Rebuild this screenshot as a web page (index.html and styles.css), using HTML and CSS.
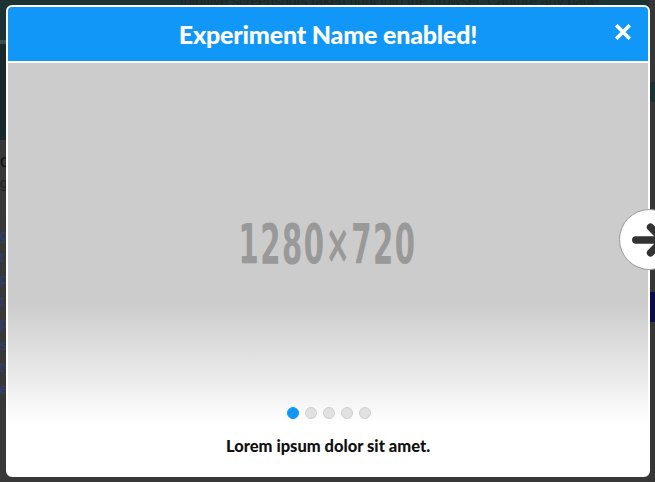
FILE: index.html
```html
<!DOCTYPE html>
<html lang="en">
<head>
<meta charset="utf-8">
<title>Experiment enabled</title>
<link rel="stylesheet" href="styles.css">
</head>
<body>
<div class="page">
  <div class="page-top">
    <p class="page-top-text">Intuitive screenshots taken right into the browser. Capture any page</p>
  </div>
  <div class="page-sep"></div>
  <div class="page-hero"></div>
  <div class="page-body">
    <p class="pb-big">o</p>
    <p class="pb-line">g</p>
    <p class="pb-link">g</p>
    <p class="pb-link">t</p>
    <p class="pb-link">p</p>
    <p class="pb-link">t</p>
    <p class="pb-link">p</p>
    <p class="pb-link">s</p>
    <p class="pb-link">ty</p>
    <p class="pb-link">e</p>
  </div>
  <div class="page-right">
    <div class="pr-teal"></div>
    <div class="pr-navy"></div>
  </div>
</div>

<div class="modal">
  <header class="modal-head">
    <h1 class="modal-title">Experiment Name enabled!</h1>
    <button class="modal-close" aria-label="Close">
      <svg width="16" height="16" viewBox="0 0 16 16"><path d="M2.5 2.5 L13.5 13.5 M13.5 2.5 L2.5 13.5" stroke="#fff" stroke-width="3.6" stroke-linecap="square"/></svg>
    </button>
  </header>
  <div class="modal-body">
    <div class="slide">
      <span class="slide-label">1280×720</span>
    </div>
    <div class="slide-foot">
      <div class="dots">
        <span class="dot active"></span>
        <span class="dot"></span>
        <span class="dot"></span>
        <span class="dot"></span>
        <span class="dot"></span>
      </div>
      <p class="caption">Lorem ipsum dolor sit amet.</p>
    </div>
  </div>
</div>

<button class="next" aria-label="Next">
  <svg width="60" height="60" viewBox="0 0 60 60">
    <path d="M16 30 H44 M31 17 L44 30 L31 43" fill="none" stroke="#333" stroke-width="7.5" stroke-linecap="round" stroke-linejoin="round"/>
  </svg>
</button>
</body>
</html>
```

FILE: styles.css
```css
* { box-sizing: border-box; }
html, body { margin: 0; padding: 0; }
body {
  width: 655px;
  height: 482px;
  overflow: hidden;
  background: #353535;
  font-family: "Lato", "Open Sans", sans-serif;
  position: relative;
}

/* dimmed page behind the modal */
.page { display: flex; flex-direction: column; height: 482px; }
.page-top { height: 40px; background: #1c3234; overflow: hidden; }
.page-top-text {
  margin: -7px 0 0 180px;
  font: 14px "Liberation Sans", sans-serif;
  color: #222;
  white-space: nowrap;
}
.page-sep { height: 4px; background: #3d4b4b; }
.page-hero { height: 96px; background: #17292b; }
.page-body { flex: 1; padding: 10px 0 0 0; background: #383838; }
.page-body p { margin: 0; font: 14px "Liberation Sans", sans-serif; line-height: 22px; }
.pb-big { color: #111; font-weight: bold; font-size: 18px !important; }
.pb-line { color: #222; margin-bottom: 30px !important; }
.pb-link { color: #2b3f78; }

.page-right {
  position: absolute;
  right: 0; top: 0;
  width: 6px; height: 482px;
  display: flex; flex-direction: column;
  background: #363636;
}
.pr-teal { margin-top: 82px; height: 20px; background: #1b3133; }
.pr-navy { margin-top: 190px; height: 30px; background: #0b0b45; }

/* modal */
.modal {
  position: absolute;
  left: 6px; top: 5px;
  width: 644px; height: 472px;
  border: 2px solid #fff;
  border-radius: 6px;
  background: #fff;
  overflow: hidden;
  display: flex;
  flex-direction: column;
}
.modal-head {
  height: 56px;
  background: #1197f7;
  display: flex;
  align-items: center;
  justify-content: center;
  position: relative;
  border-bottom: 2px solid #fff;
  flex: none;
}
.modal-title {
  margin: 0 0 1px;
  color: #fff;
  font-family: "Lato", sans-serif;
  font-weight: 900;
  font-size: 25px;
  letter-spacing: -0.2px;
}
.modal-close {
  position: absolute;
  right: 17px; top: 17px;
  width: 16px; height: 16px;
  padding: 0; border: 0; background: none;
  display: flex;
}
.modal-body { flex: 1; position: relative; }
.slide {
  height: 360px;
  background: linear-gradient(to bottom, #cccccc 0, #cccccc 240px, #e4e4e4 300px, #ffffff 360px);
  display: flex;
  align-items: center;
  justify-content: center;
  padding-top: 1px;
}
.slide-label {
  font-family: "DejaVu Sans Condensed", "DejaVu Sans", sans-serif;
  font-weight: bold;
  font-size: 45px;
  color: #999;
  display: inline-block;
  transform: scale(0.72, 1.24);
  letter-spacing: 2px;
}
.slide-foot {
  position: absolute;
  left: 0; right: 0; top: 344px;
  display: flex;
  flex-direction: column;
  align-items: center;
}
.dots { display: flex; gap: 6px; margin-left: 2px; }
.dot {
  width: 12px; height: 12px;
  border-radius: 50%;
  background: #e1e1e1;
  border: 1px solid #cfcfcf;
}
.dot.active { background: #1197f7; border-color: #1197f7; }
.caption {
  margin: 17px 0 0;
  font-family: "Lato", sans-serif;
  font-weight: 900;
  font-size: 16.5px;
  color: #111;
}

.next {
  position: absolute;
  left: 619px; top: 209px;
  width: 61px; height: 61px;
  padding: 0;
  border-radius: 50%;
  border: 1px solid #999;
  background: #fff;
  display: flex;
  align-items: center;
  justify-content: center;
}
```
